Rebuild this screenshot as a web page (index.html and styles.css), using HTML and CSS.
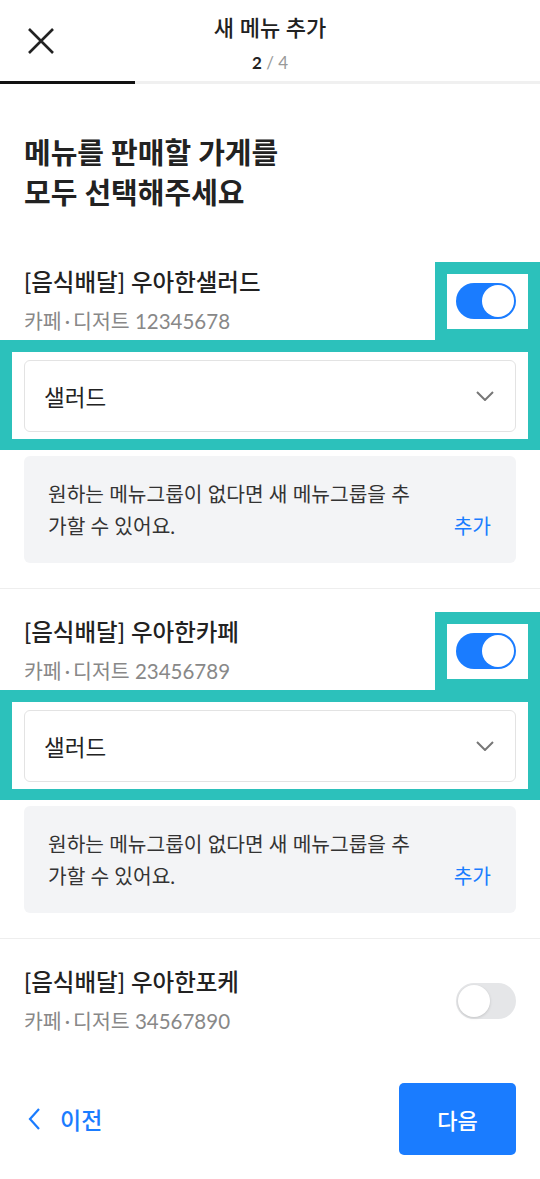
FILE: index.html
```html
<!DOCTYPE html>
<html lang="ko">
<head>
    <meta charset="UTF-8">
    <meta name="viewport" content="width=device-width, initial-scale=1.0">
    <title>새 메뉴 추가</title>
    <link rel="stylesheet" href="styles.css">
</head>
<body>

<header class="top-bar">
    <button class="close-btn" aria-label="닫기">
        <svg width="26" height="26" viewBox="0 0 26 26">
            <path d="M1 1 L25 25 M25 1 L1 25" stroke="#222" stroke-width="2.6" fill="none"/>
        </svg>
    </button>
    <div class="title-wrap">
        <h1>새 메뉴 추가</h1>
        <p class="step"><b>2</b> / 4</p>
    </div>
    <div></div>
</header>
<div class="progress"><div class="progress-fill"></div></div>

<main>
    <h2 class="page-title">메뉴를 판매할 가게를<br>모두 선택해주세요</h2>

    <section class="store">
        <div class="store-head">
            <div>
                <p class="store-name">[음식배달] 우아한샐러드</p>
                <p class="store-sub">카페<span class="dot">·</span>디저트 12345678</p>
            </div>
            <div class="toggle on"><span class="knob"></span><span class="hl hl-toggle"></span></div>
        </div>
        <div class="select">
            <span>샐러드</span>
            <svg width="18" height="10" viewBox="0 0 18 10"><path d="M1 1 L9 9 L17 1" stroke="#777" stroke-width="2" fill="none"/></svg>
            <span class="hl hl-select"></span>
        </div>
        <div class="info-box">
            <p>원하는 메뉴그룹이 없다면 새 메뉴그룹을 추<br>가할 수 있어요.</p>
            <a href="#">추가</a>
        </div>
    </section>

    <section class="store">
        <div class="store-head">
            <div>
                <p class="store-name">[음식배달] 우아한카페</p>
                <p class="store-sub">카페<span class="dot">·</span>디저트 23456789</p>
            </div>
            <div class="toggle on"><span class="knob"></span><span class="hl hl-toggle"></span></div>
        </div>
        <div class="select">
            <span>샐러드</span>
            <svg width="18" height="10" viewBox="0 0 18 10"><path d="M1 1 L9 9 L17 1" stroke="#777" stroke-width="2" fill="none"/></svg>
            <span class="hl hl-select"></span>
        </div>
        <div class="info-box">
            <p>원하는 메뉴그룹이 없다면 새 메뉴그룹을 추<br>가할 수 있어요.</p>
            <a href="#">추가</a>
        </div>
    </section>

    <section class="store last">
        <div class="store-head">
            <div>
                <p class="store-name">[음식배달] 우아한포케</p>
                <p class="store-sub">카페<span class="dot">·</span>디저트 34567890</p>
            </div>
            <div class="toggle"><span class="knob"></span></div>
        </div>
    </section>
</main>

<footer class="bottom-nav">
    <a href="#" class="prev">
        <svg width="12" height="22" viewBox="0 0 12 22"><path d="M11 1 L2 11 L11 21" stroke="#1a7cff" stroke-width="2.2" fill="none"/></svg>
        이전
    </a>
    <button class="next-btn">다음</button>
</footer>

</body>
</html>
```

FILE: styles.css
```css
body {
    font-family: Lato, "Noto Sans CJK KR", sans-serif;
    background-color: #fff;
    color: #222;
    margin: 0;
    padding: 0;
}

p, h1, h2 {
    margin: 0;
}

.top-bar {
    display: grid;
    grid-template-columns: 1fr auto 1fr;
    padding: 14px 0 6px;
}

.close-btn {
    background: none;
    border: none;
    padding: 0;
    margin: 14px 0 0 28px;
    width: 26px;
    height: 26px;
    align-self: start;
}

.title-wrap {
    text-align: center;
}

.title-wrap h1 {
    font-size: 22px;
    font-weight: 500;
    line-height: 28px;
}

.step {
    margin-top: 9px;
    font-size: 17px;
    line-height: 24px;
    color: #999;
}

.step b {
    color: #222;
}

.progress {
    height: 3px;
    background-color: #f0f0f0;
}

.progress-fill {
    width: 25%;
    height: 100%;
    background-color: #111;
}

.page-title {
    margin: 49px 24px 26px;
    font-size: 29px;
    font-weight: 700;
    line-height: 40px;
}

.store {
    padding: 28px 24px 25px;
    border-bottom: 1px solid #eee;
}

.store.last {
    border-bottom: none;
    padding-bottom: 0;
}

.store-head {
    display: flex;
    justify-content: space-between;
    align-items: center;
}

.store-name {
    font-size: 23.5px;
    line-height: 30px;
    font-weight: 500;
}

.store-sub {
    margin-top: 10px;
    font-size: 20.5px;
    line-height: 28px;
    color: #888;
}

.store-sub .dot {
    margin: 0 3px;
}

.toggle {
    position: relative;
    width: 60px;
    height: 36px;
    border-radius: 18px;
    background-color: #e5e6e8;
}

.toggle .knob {
    position: absolute;
    top: 2px;
    left: 2px;
    width: 32px;
    height: 32px;
    border-radius: 50%;
    background-color: #fff;
    box-shadow: 0 1px 3px rgba(0, 0, 0, 0.15);
}

.toggle.on {
    background-color: #1a7cff;
}

.toggle.on .knob {
    left: 26px;
    box-shadow: none;
}

.select {
    position: relative;
    margin-top: 25px;
    height: 70px;
    border: 1px solid #e3e3e3;
    border-radius: 6px;
    padding: 0 21px 0 19px;
    display: flex;
    align-items: center;
    justify-content: space-between;
    font-size: 22.5px;
}

.info-box {
    margin-top: 24px;
    background-color: #f3f4f6;
    border-radius: 6px;
    padding: 22px 25px 21px 24px;
    display: flex;
    justify-content: space-between;
    align-items: flex-end;
    font-size: 20.3px;
    line-height: 32px;
    color: #333;
}

.info-box a {
    color: #1a7cff;
    text-decoration: none;
}

/* 강조 표시 (오버레이) */
.hl {
    position: absolute;
    border: 12px solid #2cc1bb;
    pointer-events: none;
}

.hl-toggle {
    top: -21px;
    left: -21px;
    right: -24px;
    bottom: -22px;
}

.hl-select {
    top: -21px;
    left: -25px;
    right: -25px;
    bottom: -19px;
    border-bottom-width: 11px;
}

.bottom-nav {
    display: flex;
    justify-content: space-between;
    align-items: center;
    padding: 48px 24px 0;
}

.prev {
    display: flex;
    align-items: center;
    gap: 20px;
    padding-left: 4px;
    color: #1a7cff;
    text-decoration: none;
    font-size: 23px;
    font-weight: 500;
}

.next-btn {
    width: 117px;
    height: 72px;
    border: none;
    border-radius: 5px;
    background-color: #1a7cff;
    color: #fff;
    font-family: inherit;
    font-size: 22px;
    font-weight: 500;
}
```
